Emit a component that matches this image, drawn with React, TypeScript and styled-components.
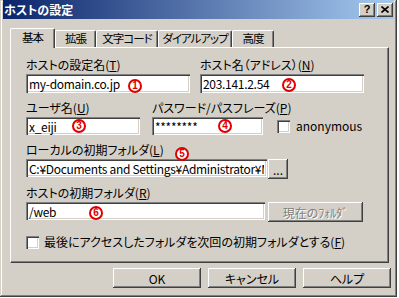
import React from "react";
import styled, { createGlobalStyle } from "styled-components";

const FACE = `"Noto Sans CJK JP", "Liberation Sans", sans-serif`;

const GlobalStyle = createGlobalStyle`
  html, body { margin: 0; padding: 0; background: #ffffff; }
  body { font-family: ${FACE}; font-size: 12px; }
  * { box-sizing: border-box; }
`;

const Window = styled.div`
  width: 397px;
  height: 297px;
  background: #d4d0c8;
  box-shadow: inset -1px -1px #404040, inset 1px 1px #d4d0c8,
    inset -2px -2px #808080, inset 2px 2px #ffffff;
  padding: 0 3px 3px 3px;
  display: flex;
  flex-direction: column;
  font-family: ${FACE};
  font-size: 12px;
  font-feature-settings: "palt";
  color: #000;
`;

const TitleBar = styled.div`
  height: 19px;
  display: flex;
  align-items: center;
  justify-content: space-between;
  padding: 0 1px 0 1px;
  background: linear-gradient(to right, #0a246a, #a6caf0);
`;

const TitleText = styled.span`
  color: #fff;
  font-weight: bold;
  font-size: 12px;
  line-height: 14px;
`;

const TitleButtons = styled.div`
  display: flex;
  gap: 2px;
`;

const CaptionButton = styled.div`
  width: 16px;
  height: 14px;
  background: #d4d0c8;
  box-shadow: inset -1px -1px #404040, inset 1px 1px #ffffff,
    inset -2px -2px #808080;
  display: flex;
  align-items: center;
  justify-content: center;
  font-family: "Liberation Sans", sans-serif;
  font-weight: bold;
  font-size: 11px;
  line-height: 11px;
  color: #000;
`;

const TabStrip = styled.div`
  display: flex;
  align-items: flex-end;
  margin: 9px 0 0 7px;
  height: 19px;
`;

const Tab = styled.div<{ $w: number; $active?: boolean }>`
  width: ${(p) => p.$w}px;
  height: ${(p) => (p.$active ? 20 : 17)}px;
  margin-bottom: ${(p) => (p.$active ? -1 : 0)}px;
  position: relative;
  z-index: ${(p) => (p.$active ? 2 : 0)};
  background: #d4d0c8;
  border-top: 1px solid #ffffff;
  border-left: 1px solid #ffffff;
  border-right: 1px solid #404040;
  border-radius: 2px 2px 0 0;
  box-shadow: inset -1px 0 #808080;
  display: flex;
  justify-content: center;
  padding-top: ${(p) => (p.$active ? 1 : 0)}px;
  line-height: 14px;
  font-size: 11.5px;
  letter-spacing: -1px;
  white-space: nowrap;
`;

const Panel = styled.div`
  margin-left: 7px;
  width: 379px;
  height: 216px;
  border-top: 1px solid #ffffff;
  border-left: 1px solid #ffffff;
  border-right: 1px solid #404040;
  border-bottom: 1px solid #404040;
  box-shadow: inset -1px -1px #808080;
  padding: 10px 0 0 15px;
  display: flex;
  flex-direction: column;
`;

const Row = styled.div<{ $mt?: number; $gap?: number }>`
  display: flex;
  align-items: flex-end;
  gap: ${(p) => p.$gap ?? 0}px;
  margin-top: ${(p) => p.$mt ?? 0}px;
`;

const Field = styled.div<{ $w: number }>`
  position: relative;
  width: ${(p) => p.$w}px;
  display: flex;
  flex-direction: column;
`;

const Label = styled.div`
  line-height: 14px;
  height: 14px;
  margin-bottom: 2px;
  white-space: nowrap;
  font-size: 12px;
`;

const TextBox = styled.input<{ $h?: number }>`
  display: block;
  width: 100%;
  height: ${(p) => p.$h ?? 18}px;
  border: none;
  outline: none;
  margin: 0;
  padding: 0 3px;
  background: #ffffff;
  box-shadow: inset 1px 1px #808080, inset 2px 2px #404040,
    inset -1px -1px #ffffff, inset -2px -2px #d4d0c8;
  font-family: ${FACE};
  font-feature-settings: "palt";
  font-size: 12px;
  letter-spacing: -0.3px;
  color: #000;
`;

const InputLine = styled.div<{ $gap: number }>`
  display: flex;
  align-items: flex-start;
  gap: ${(p) => p.$gap}px;
`;

const PushButton = styled.div<{ $w: number; $disabled?: boolean }>`
  width: ${(p) => p.$w}px;
  height: 20px;
  flex: none;
  background: #d4d0c8;
  box-shadow: inset -1px -1px #404040, inset 1px 1px #ffffff,
    inset -2px -2px #808080;
  display: flex;
  align-items: center;
  justify-content: center;
  font-size: 12px;
  color: ${(p) => (p.$disabled ? "#808080" : "#000")};
  text-shadow: ${(p) => (p.$disabled ? "1px 1px #ffffff" : "none")};
  white-space: nowrap;
`;

const Check = styled.span`
  width: 13px;
  height: 13px;
  flex: none;
  background: #ffffff;
  box-shadow: inset 1px 1px #808080, inset 2px 2px #404040,
    inset -1px -1px #ffffff, inset -2px -2px #d4d0c8;
`;

const CheckLine = styled.div<{ $gap: number; $ml?: number; $mb?: number }>`
  display: flex;
  align-items: center;
  gap: ${(p) => p.$gap}px;
  margin-left: ${(p) => p.$ml ?? 0}px;
  margin-bottom: ${(p) => p.$mb ?? 0}px;
  white-space: nowrap;
  line-height: 14px;
`;

const Mark = styled.span<{ $x: number; $y: number }>`
  position: absolute;
  left: ${(p) => p.$x}px;
  top: ${(p) => p.$y}px;
  width: 14px;
  height: 14px;
  border-radius: 50%;
  border: 2px solid #e00000;
  color: #e00000;
  background: #ffffff;
  font-family: "Liberation Sans", sans-serif;
  font-weight: bold;
  font-size: 10px;
  line-height: 10px;
  text-align: center;
  pointer-events: none;
`;

const Footer = styled.div`
  display: flex;
  justify-content: flex-end;
  gap: 7px;
  margin-top: 5px;
  padding-right: 3px;
`;

const Key = ({ k }: { k: string }) => (
  <>
    (<u>{k}</u>)
  </>
);

export default function App() {
  return (
    <>
      <GlobalStyle />
      <Window>
        <TitleBar>
          <TitleText>ホストの設定</TitleText>
          <TitleButtons>
            <CaptionButton>?</CaptionButton>
            <CaptionButton>
              <svg width="8" height="7" viewBox="0 0 8 7">
                <path d="M0.5 0.5 L7.5 6.5 M7.5 0.5 L0.5 6.5" stroke="#000" strokeWidth="1.6" />
              </svg>
            </CaptionButton>
          </TitleButtons>
        </TitleBar>

        <TabStrip>
          <Tab $w={45} $active>基本</Tab>
          <Tab $w={41}>拡張</Tab>
          <Tab $w={62}>文字コード</Tab>
          <Tab $w={74}>ダイアルアップ</Tab>
          <Tab $w={42}>高度</Tab>
        </TabStrip>

        <Panel>
          <Row $gap={10}>
            <Field $w={164}>
              <Label>ホストの設定名<Key k="T" /></Label>
              <TextBox $h={19} defaultValue="my-domain.co.jp" />
              <Mark $x={102} $y={21}>1</Mark>
            </Field>
            <Field $w={164}>
              <Label>ホスト名（アドレス）<Key k="N" /></Label>
              <TextBox $h={19} defaultValue="203.141.2.54" />
              <Mark $x={82} $y={20}>2</Mark>
            </Field>
          </Row>

          <Row $mt={8} $gap={12}>
            <Field $w={114}>
              <Label>ユーザ名<Key k="U" /></Label>
              <TextBox defaultValue="x_eiji" />
              <Mark $x={46} $y={18}>3</Mark>
            </Field>
            <Field $w={111}>
              <Label>パスワード/パスフレーズ<Key k="P" /></Label>
              <TextBox defaultValue="********" />
              <Mark $x={66} $y={18}>4</Mark>
            </Field>
            <CheckLine $gap={6} $ml={2} $mb={2}>
              <Check />
              <span>anonymous</span>
            </CheckLine>
          </Row>

          <Row $mt={8}>
            <Field $w={262}>
              <Label>ローカルの初期フォルダ<Key k="L" /></Label>
              <InputLine $gap={1}>
                <TextBox defaultValue="C:¥Documents and Settings¥Administrator¥My Documents" style={{ width: 241 }} />
                <PushButton $w={20}>...</PushButton>
              </InputLine>
              <Mark $x={149} $y={4}>5</Mark>
            </Field>
          </Row>

          <Row $mt={7}>
            <Field $w={337}>
              <Label>ホストの初期フォルダ<Key k="R" /></Label>
              <InputLine $gap={3}>
                <TextBox defaultValue="/web" style={{ width: 239 }} />
                <PushButton $w={95} $disabled>現在のﾌｫﾙﾀﾞ</PushButton>
              </InputLine>
              <Mark $x={63} $y={20}>6</Mark>
            </Field>
          </Row>

          <Row $mt={13}>
            <CheckLine $gap={5}>
              <Check />
              <span>最後にアクセスしたフォルダを次回の初期フォルダとする<Key k="F" /></span>
            </CheckLine>
          </Row>
        </Panel>

        <Footer>
          <PushButton $w={88}>OK</PushButton>
          <PushButton $w={88}>キャンセル</PushButton>
          <PushButton $w={88}>ヘルプ</PushButton>
        </Footer>
      </Window>
    </>
  );
}
